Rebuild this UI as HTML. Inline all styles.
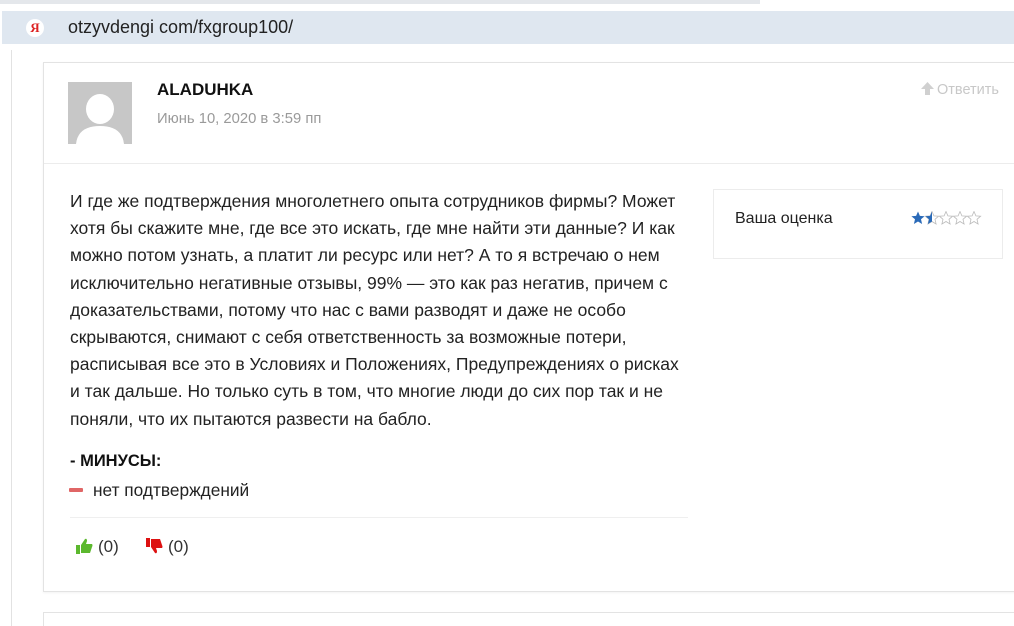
<!DOCTYPE html>
<html><head><meta charset="utf-8"><style>
html,body{margin:0;width:1014px;height:626px;overflow:hidden}
body{background:#fff;font-family:"Liberation Sans",Arial,sans-serif;position:relative}
.top{position:absolute;left:0;top:0;width:760px;height:4px;background:#e4e7eb}
.addr{position:absolute;left:2px;top:11px;width:1012px;height:33px;background:#dfe7f0}
.addr span{position:absolute;left:66px;top:6px;font-size:18px;color:#222}
.ya{position:absolute;left:24px;top:8px;width:18px;height:18px;border-radius:50%;background:#fff;color:#d22;font-size:13px;font-weight:bold;text-align:center;line-height:18px;font-family:"Liberation Serif",serif}
.outer{position:absolute;left:11px;top:50px;width:1px;height:576px;background:#e2e2e2}
.card{position:absolute;left:43px;top:62px;width:980px;height:528px;border:1px solid #e3e3e3;box-shadow:0 1px 2px rgba(0,0,0,.05)}
.card2{position:absolute;left:43px;top:612px;width:980px;height:30px;border:1px solid #e3e3e3}
.av{position:absolute;left:68px;top:82px;width:64px;height:62px;background:#c7c7c7;overflow:hidden}
.name{position:absolute;left:157px;top:80px;font-weight:bold;font-size:17px;color:#111}
.date{position:absolute;left:157px;top:111px;font-size:14.8px;color:#9a9a9a}
.reply{position:absolute;left:921px;top:82px;font-size:14.5px;color:#c8c8c8}
.sep{position:absolute;left:44px;top:163px;width:970px;height:1px;background:#ececec}
.text{position:absolute;left:70px;top:188px;white-space:nowrap;font-size:17.5px;line-height:27.2px;color:#222}
.rate{position:absolute;left:713px;top:189px;width:288px;height:68px;border:1px solid #ececec}
.rate span{position:absolute;left:21px;top:20px;font-size:16px;color:#222}
.stars{position:absolute;left:197px;top:21px}
.min{position:absolute;left:70px;top:452px;font-weight:bold;font-size:16.5px;color:#111}
.dash{position:absolute;left:69px;top:488px;width:14px;height:4px;background:#e06666;border-radius:1px}
.mt{position:absolute;left:93px;top:480px;font-size:17.3px;color:#222}
.sep2{position:absolute;left:70px;top:517px;width:618px;height:1px;background:#efefef}
.v{position:absolute;top:537px;font-size:17px;color:#333}
.v svg{vertical-align:-2px;margin-right:5px}
</style></head><body>
<div class="top"></div>
<div class="addr"><div class="ya">Я</div><span>otzyvdengi com/fxgroup100/</span></div>
<div class="outer"></div>
<div class="card"></div><div class="card2"></div>
<div class="av"><svg width="64" height="62"><ellipse cx="32" cy="27" rx="14" ry="15" fill="#fff"/><path d="M8 62 Q10 44 32 44 Q54 44 56 62Z" fill="#fff"/></svg></div>
<div class="name">ALADUHKA</div>
<div class="date">Июнь 10, 2020 в 3:59 пп</div>
<div class="reply"><svg width="13" height="13" viewBox="0 0 13 13" style="vertical-align:-1px;margin-right:3px"><path d="M6.5 0L13 7H9V13H4V7H0Z" fill="#d0d0d0"/></svg>Ответить</div>
<div class="sep"></div>
<div class="text">И где же подтверждения многолетнего опыта сотрудников фирмы? Может<br>хотя бы скажите мне, где все это искать, где мне найти эти данные? И как<br>можно потом узнать, а платит ли ресурс или нет? А то я встречаю о нем<br>исключительно негативные отзывы, 99% — это как раз негатив, причем с<br>доказательствами, потому что нас с вами разводят и даже не особо<br>скрываются, снимают с себя ответственность за возможные потери,<br>расписывая все это в Условиях и Положениях, Предупреждениях о рисках<br>и так дальше. Но только суть в том, что многие люди до сих пор так и не<br>поняли, что их пытаются развести на бабло.</div>
<div class="rate"><span>Ваша оценка</span><div class="stars"><svg width="72" height="14" viewBox="0 0 72 14">
<path d="M7 0.5L8.9 4.9 13.6 5.2 10 8.3 11.1 13 7 10.5 2.9 13 4 8.3 0.4 5.2 5.1 4.9Z" fill="#2a6ab8"/>
<g fill="none" stroke="#bbb" stroke-width="0.8">
<path d="M21 0.5L22.9 4.9 27.6 5.2 24 8.3 25.1 13 21 10.5 16.9 13 18 8.3 14.4 5.2 19.1 4.9Z"/>
<path d="M35 0.5L36.9 4.9 41.6 5.2 38 8.3 39.1 13 35 10.5 30.9 13 32 8.3 28.4 5.2 33.1 4.9Z"/>
<path d="M49 0.5L50.9 4.9 55.6 5.2 52 8.3 53.1 13 49 10.5 44.9 13 46 8.3 42.4 5.2 47.1 4.9Z"/>
<path d="M63 0.5L64.9 4.9 69.6 5.2 66 8.3 67.1 13 63 10.5 58.9 13 60 8.3 56.4 5.2 61.1 4.9Z"/>
</g>
<path d="M21 0.5L21 10.5 16.9 13 18 8.3 14.4 5.2 19.1 4.9Z" fill="#2a6ab8"/>
</svg></div></div>
<div class="min">- МИНУСЫ:</div>
<div class="dash"></div><div class="mt">нет подтверждений</div>
<div class="sep2"></div>
<div class="v" style="left:76px"><svg width="17" height="16" viewBox="0 0 17 16"><rect x="0" y="7" width="4" height="9" fill="#5cb82e"/><path d="M5 7L9 1Q11 0 11 3L10 6H16Q17 7 16 9L14 15H5Z" fill="#5cb82e"/></svg>(0)</div>
<div class="v" style="left:146px"><svg width="17" height="16" viewBox="0 0 17 16"><rect x="0" y="0" width="4" height="9" fill="#d11"/><path d="M5 9L9 15Q11 16 11 13L10 10H16Q17 9 16 7L14 1H5Z" fill="#d11"/></svg>(0)</div>
</body></html>
